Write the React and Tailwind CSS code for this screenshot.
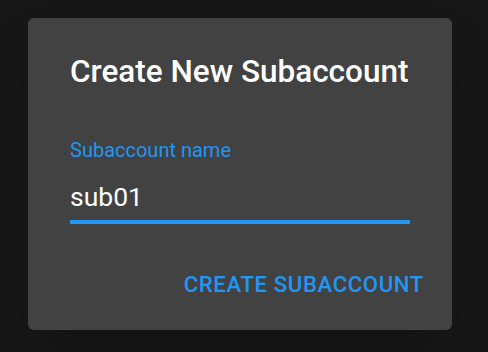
import React from "react";

const App = () => {
  return (
    <div
      className="w-[488px] h-[352px] bg-[#171717] pt-[18px] pl-[28px]"
      style={{ fontFamily: "Roboto, 'Liberation Sans', sans-serif" }}
    >
      <div className="w-[424px] h-[312px] bg-[#424242] rounded-[6px] shadow-2xl flex flex-col">
        {/* title */}
        <h2 className="pt-[30px] px-[42px] text-[31.5px] leading-[48px] font-medium text-white">
          Create New Subaccount
        </h2>

        {/* text field */}
        <div className="px-[42px] mt-[44px] flex flex-col">
          <label className="text-[20px] leading-[20px] text-[#2196f3]">
            Subaccount name
          </label>
          <div className="mt-[24px] text-[26.5px] leading-[26px] text-white">sub01</div>
          <div className="mt-[10px] h-[4px] bg-[#2196f3]" />
        </div>

        {/* actions */}
        <div className="mt-[49px] flex justify-end pr-[28px]">
          <button className="text-[22.2px] leading-[22px] font-medium tracking-[0.6px] text-[#2196f3] uppercase">
            Create Subaccount
          </button>
        </div>
      </div>
    </div>
  );
};

export default App;
